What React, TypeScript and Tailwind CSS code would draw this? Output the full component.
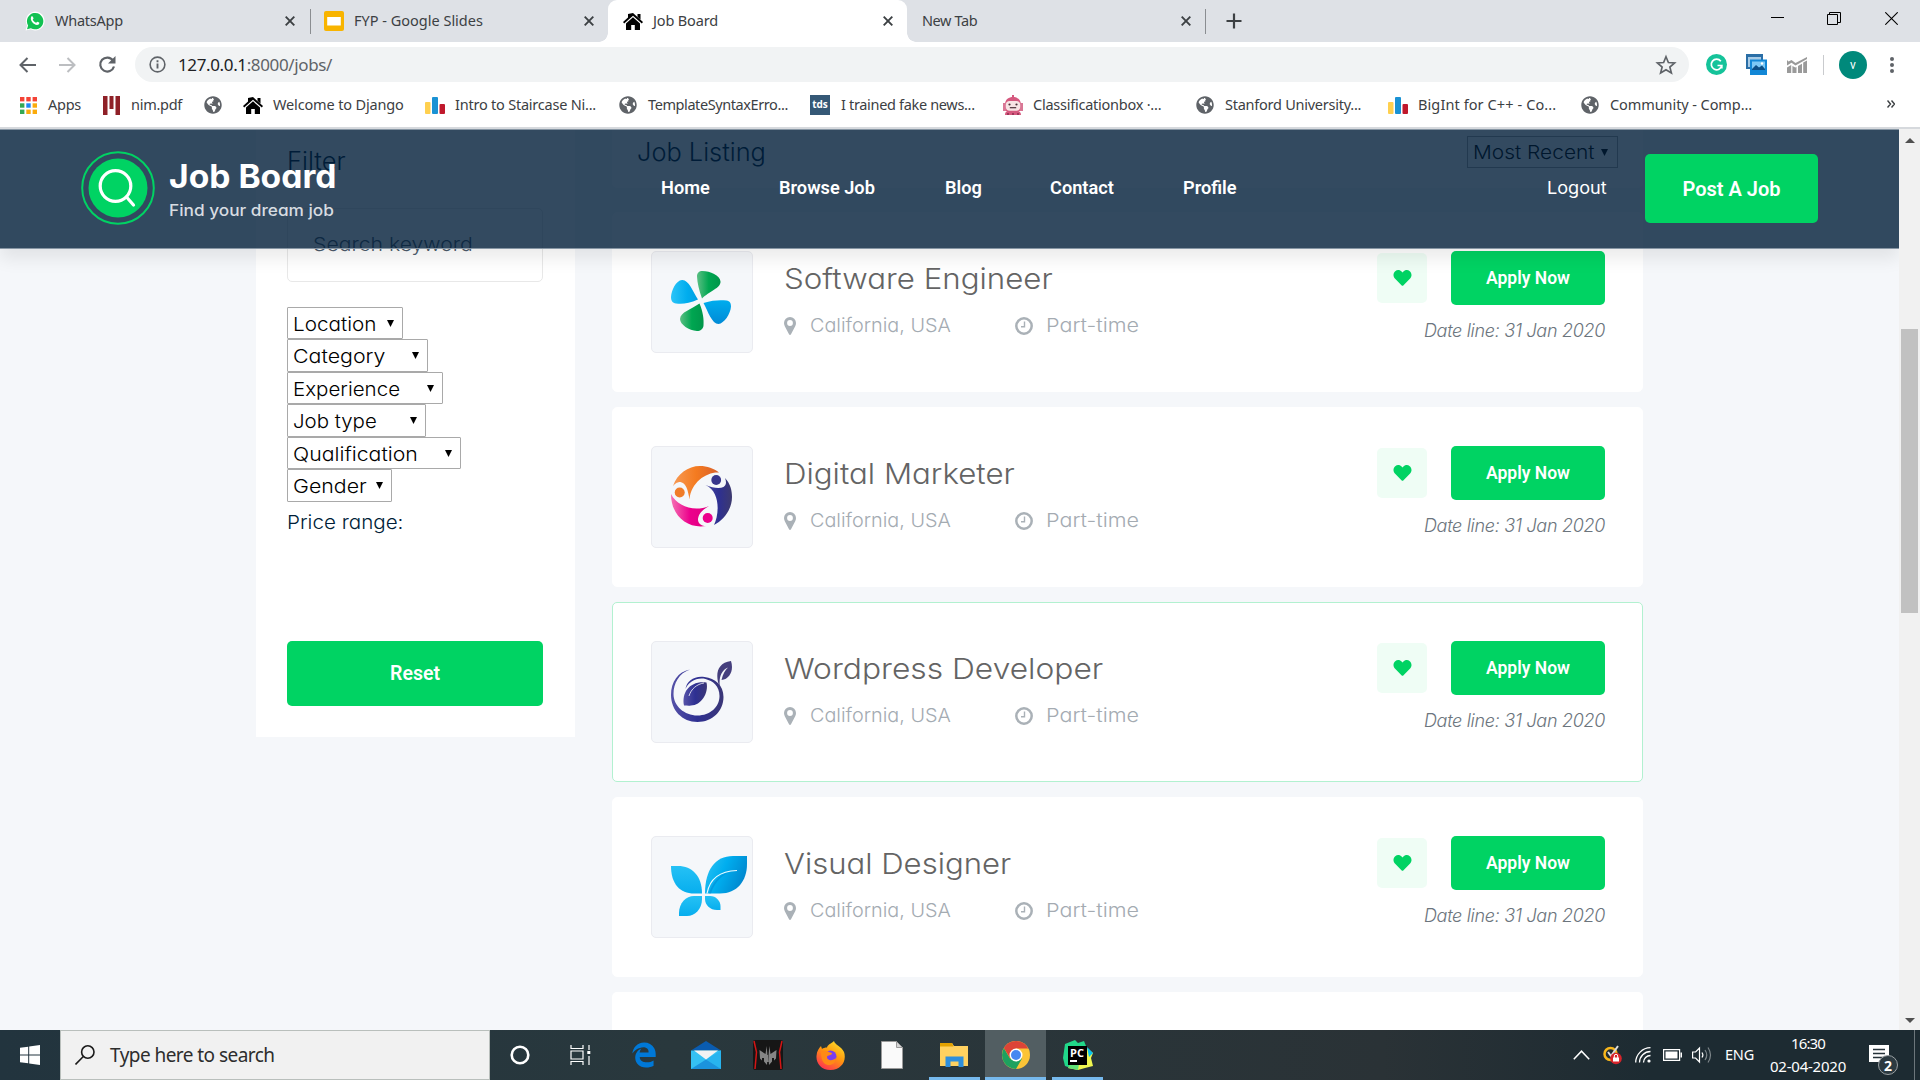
import React from "react";
import { FaEdgeLegacy, FaGlobeAmericas, FaHeart } from "react-icons/fa";

const UI = "font-['Noto_Sans',sans-serif] whitespace-nowrap";
const POP = "font-['Inter',sans-serif] [font-feature-settings:'cv11'] whitespace-nowrap";
const ROB = "font-['Roboto',sans-serif] whitespace-nowrap";

/* ---------- small icons ---------- */

const WhatsApp = () => (
  <svg viewBox="0 0 20 20" className="h-5 w-5" preserveAspectRatio="none">
    <path d="M.6 19.5 2 14.6A9.4 9.4 0 1 1 5.6 18.200Z" fill="#fff" />
    <path d="M2 18.200 3.100 14.400A8.200 8.200 0 1 1 5.900 17.200Z" fill="#12c152" />
    <path d="M6.300 5.600c.5-.6 1.300-.5 1.600.2l.6 1.400c.1.500-.8 1.200-.7 1.500.7 1.400 1.800 2.400 3.300 3 .400.100.900-1.200 1.400-1l1.600.8c.500.300.200 1.500-.5 2-3.200 2.100-9.600-3.700-7.300-7.900z" fill="#fff" />
  </svg>
);

const Slides = () => (
  <svg viewBox="0 0 20 20" className="h-5 w-5">
    <rect width="20" height="20" rx="2" fill="#f8b400" />
    <rect x="3.200" y="6" width="13.600" height="8.500" fill="#fff" />
  </svg>
);

const House = () => (
  <svg viewBox="0 0 20 17" className="h-[17px] w-5" preserveAspectRatio="none">
    <path d="M10 0 20 9l-1.200 1.500L10 2.800 1.200 10.500 0 9l5-4.500V1h0zM14.500 1h3v5.500l-3-2.700z" fill="#000" />
    <path d="M10 4.300 17 10.500V17h-5.200v-5H8.200v5H3v-6.500z" fill="#000" />
  </svg>
);

const TabClose = () => (
  <svg viewBox="0 0 10 10" className="h-[10px] w-[10px]">
    <path d="M.7.7l8.600 8.600M9.300.7.7 9.300" stroke="#3c4043" strokeWidth="1.900" />
  </svg>
);

const Globe = () => <FaGlobeAmericas className="h-[18px] w-[18px] text-[#5f6368]" />;

const Bars = () => (
  <svg viewBox="0 0 20 17" className="h-[17px] w-5">
    <rect x="0" y="5" width="5.500" height="12" rx="1" fill="#ffd04f" />
    <rect x="7" y="0" width="6" height="17" rx="1" fill="#1a92d4" />
    <rect x="14.500" y="7" width="5.500" height="10" rx="1" fill="#c0182c" />
  </svg>
);

const Apps = () => (
  <svg viewBox="0 0 17 17" className="h-[17px] w-[17px]">
    {["#f44336", "#f44336", "#f44336", "#34a853", "#1e88f5", "#fbab0c", "#34a853", "#fbab0c", "#fbab0c"].map((f, i) => (
      <rect key={i} x={(i % 3) * 6.3} y={Math.floor(i / 3) * 6.3} width="4.400" height="4.400" fill={f} />
    ))}
  </svg>
);

const Nim = () => (
  <svg viewBox="0 0 17 19" className="h-[19px] w-[17px]">
    <path d="M0 0h4.500v19H0zM6.500 0h4v13h-4zM12.500 0H17v19h-4.500z" fill="#8f2027" />
  </svg>
);

const Robot = () => (
  <svg viewBox="0 0 20 20" className="h-5 w-5">
    <path d="M9 0h2v3H9zM2 10C2 4 6 2 10 2s8 2 8 8v6H2zM2 20c0-4 3-5 8-5s8 1 8 5z" fill="#d5587e" />
    <path d="M0 8h3v8H0zM17 8h3v8h-3z" fill="#d97795" />
    <rect x="2.800" y="6" width="14.400" height="9.800" rx="4" fill="#f7e3e4" />
    <circle cx="6.500" cy="9.500" r="1.100" fill="#4a3038" />
    <circle cx="13.500" cy="9.500" r="1.100" fill="#4a3038" />
    <path d="M6.800 12.700h6.400" stroke="#4a3038" strokeWidth="1.200" />
    <path d="M4 19h2M9 19h2M14 19h2" stroke="#8c2c4e" strokeWidth="1.500" />
  </svg>
);

/* ---------- browser ---------- */

const Tab = ({ box, icon, label, track }: { box: string; icon?: React.ReactNode; label: string; track: string }) => (
  <div className={"flex h-[42px] items-center " + box}>
    {icon && <span className="mr-[10px] flex w-5 shrink-0 justify-center">{icon}</span>}
    <span className={`${UI} flex-1 pb-[2px] text-[14.5px] leading-5 text-[#3c4043] ${track}`}>{label}</span>
    <TabClose />
  </div>
);

const TabStrip = () => (
  <div className="flex h-[42px] bg-[#dee1e6]">
    <Tab box="w-[310px] pl-[25px] pr-[15px]" icon={<WhatsApp />} label="WhatsApp" track="tracking-[-0.24px]" />
    <span className="mt-[9px] h-[25px] w-px bg-[#8a8d91]" />
    <Tab box="w-[297px] pl-[13px] pr-[14px]" icon={<Slides />} label="FYP - Google Slides" track="" />
    <div className="relative w-[299px] rounded-t-[9px] bg-white">
      <span className="absolute bottom-0 -left-[9px] h-[9px] w-[9px] bg-[radial-gradient(circle_at_0_0,#dee1e6_8.500px,#fff_9px)]" />
      <span className="absolute -right-[9px] bottom-0 h-[9px] w-[9px] bg-[radial-gradient(circle_at_100%_0,#dee1e6_8.500px,#fff_9px)]" />
      <Tab box="pl-[15px] pr-[14px]" icon={<House />} label="Job Board" track="tracking-[-0.15px]" />
    </div>
    <Tab box="w-[298px] pl-[15px] pr-[14px]" label="New Tab" track="tracking-[-0.4px]" />
    <span className="mt-[9px] h-[25px] w-px bg-[#8a8d91]" />
    <svg viewBox="0 0 16 16" className="mt-[13px] ml-5 h-4 w-4">
      <path d="M8 .5v15M.5 8h15" stroke="#3c4043" strokeWidth="2.200" />
    </svg>
    <div className="ml-auto flex pt-3 pr-[22px]">
      <svg viewBox="0 0 13 13" className="mr-[43px] h-[13px] w-[13px]"><path d="M0 5.500h13" stroke="#000" /></svg>
      <svg viewBox="0 0 14 13" className="mr-11 h-[13px] w-[14px]">
        <path d="M.5 2.500h10v10H.5zM2.500 2.500v-2h11v10h-3" fill="none" stroke="#000" />
      </svg>
      <svg viewBox="0 0 13 13" className="h-[13px] w-[13px]"><path d="M.3.3l12.400 12.400M12.700.3.3 12.700" stroke="#000" strokeWidth="1.100" /></svg>
    </div>
  </div>
);

const Toolbar = () => (
  <div className="flex h-[45px] items-center pl-[19px]">
    <svg viewBox="0 0 17 16" className="h-4 w-[17px]" fill="none" stroke="#5f6368" strokeWidth="2"><path d="M17 8H2M8.500 1 1.500 8l7 7" /></svg>
    <svg viewBox="0 0 17 16" className="ml-[23px] h-4 w-[17px]" fill="none" stroke="#bcbec1" strokeWidth="2"><path d="M0 8h15M8.500 1l7 7-7 7" /></svg>
    <svg viewBox="0 0 18 18" className="ml-[22px] h-[18px] w-[18px]">
      <path d="M15 4.500A7 7 0 1 0 16 10.500" fill="none" stroke="#5f6368" strokeWidth="2.200" />
      <path d="M17.500 0v7.500H10z" fill="#5f6368" />
    </svg>
    <div className="ml-[19px] flex h-[35px] w-[1554px] items-center rounded-full bg-[#f1f3f4] pr-[12px] pl-[14px]">
      <svg viewBox="0 0 18 18" className="h-[17px] w-[17px]">
        <circle cx="9" cy="9" r="7.800" fill="none" stroke="#5f6368" strokeWidth="1.700" />
        <path d="M9 8v5.200M9 4.600v2" stroke="#5f6368" strokeWidth="2" />
      </svg>
      <span className={`${UI} ml-3 text-[17px] leading-6 tracking-[-0.37px] text-[#5f6368]`}>
        <span className="text-[#202124]">127.0.0.1</span>:8000/jobs/
      </span>
      <svg viewBox="0 0 24 24" className="ml-auto h-[22px] w-[22px]">
        <path d="m12 3 2.600 6.300 6.800.5-5.200 4.400 1.700 6.600-5.900-3.600-5.900 3.600 1.700-6.600-5.200-4.400 6.800-.5z" fill="none" stroke="#5f6368" strokeWidth="1.800" />
      </svg>
    </div>
    <svg viewBox="0 0 21 21" className="ml-[17px] h-[21px] w-[21px]">
      <circle cx="10.500" cy="10.500" r="10.500" fill="#15c39a" />
      <path d="M14.800 7.200A5.300 5.300 0 1 0 15.800 11.500H11.500M15.800 11.500v3" fill="none" stroke="#fff" strokeWidth="1.700" />
    </svg>
    <svg viewBox="0 0 21 21" className="ml-[19px] h-[21px] w-[21px]">
      <path d="M0 0h17v15H0z" fill="#2a6ea6" />
      <path d="M2 3h13v10H2z" fill="#a8cbe6" />
      <path d="M4 5.500h17V21H4z" fill="#1287d6" />
      <path d="M6 7.500h13v8H6z" fill="#7cc8f5" />
      <path d="M6 15l4-4 3 2.500 3-2 3 3.500v1H6z" fill="#0c4f86" />
      <circle cx="16" cy="9.500" r="1.200" fill="#fff" />
    </svg>
    <svg viewBox="0 0 20 16" className="ml-[20px] h-4 w-5">
      <path d="M0 10.500 4.200 8v8H0zM5.400 9l3 1.500L9.500 10v6H5.400zM11 9l4-2.300V16h-4zM16.200 5.500 20 3.500V16h-3.800zM0 3l1.500 1.500L4.500 3 8.500 6 20 0v2L8.500 8.500 4.500 5.800 0 8.500z" fill="#9a9a9a" />
    </svg>
    <span className="ml-[16px] h-5 w-px bg-[#c9cbce]" />
    <span className={`${ROB} ml-[15px] flex h-7 w-7 items-center justify-center rounded-full bg-[#00897b] text-[12px] text-white`}>v</span>
    <svg viewBox="0 0 4 16" className="ml-[23px] h-4 w-1" fill="#5f6368">
      <circle cx="2" cy="2" r="2" /><circle cx="2" cy="8" r="2" /><circle cx="2" cy="14" r="2" />
    </svg>
  </div>
);

const bookmarks: { slot: string; icon: React.ReactNode; gap: string; label?: string; track?: string }[] = [
  { slot: "w-[83px]", icon: <Apps />, gap: "gap-[11px]", label: "Apps", track: "tracking-[-0.25px]" },
  { slot: "w-[101px]", icon: <Nim />, gap: "gap-[11px]", label: "nim.pdf", track: "tracking-[-0.27px]" },
  { slot: "w-[39px]", icon: <Globe />, gap: "" },
  { slot: "w-[182px]", icon: <House />, gap: "gap-[10px]", label: "Welcome to Django", track: "tracking-[-0.15px]" },
  { slot: "w-[194px]", icon: <Bars />, gap: "gap-[10px]", label: "Intro to Staircase Ni...", track: "tracking-[-0.22px]" },
  { slot: "w-[191px]", icon: <Globe />, gap: "gap-[11px]", label: "TemplateSyntaxErro...", track: "tracking-[-0.41px]" },
  {
    slot: "w-[193px]",
    icon: <span className="flex h-5 w-5 items-center justify-center bg-[#355876] pb-px font-['Open_Sans'] text-[10px] font-bold text-white">tds</span>,
    gap: "gap-[11px]", label: "I trained fake news...", track: "tracking-[-0.33px]",
  },
  { slot: "w-[193px]", icon: <Robot />, gap: "gap-[10px]", label: "Classificationbox ·...", track: "tracking-[-0.24px]" },
  { slot: "w-[192px]", icon: <Globe />, gap: "gap-[11px]", label: "Stanford University...", track: "tracking-[-0.25px]" },
  { slot: "w-[193px]", icon: <Bars />, gap: "gap-[10px]", label: "BigInt for C++ - Co...", track: "tracking-[0.1px]" },
  { slot: "w-[200px]", icon: <Globe />, gap: "gap-[11px]", label: "Community - Comp...", track: "tracking-[-0.08px]" },
];

const Bookmarks = () => (
  <div className="flex h-[42px] items-center border-b-2 border-[#d6d9dd] bg-white pb-[4px] pl-5">
    {bookmarks.map((b, i) => (
      <div key={i} className={`flex shrink-0 items-center ${b.gap} ${b.slot}`}>
        <span className="shrink-0">{b.icon}</span>
        {b.label && <span className={`${UI} pb-[2px] text-[14.5px] leading-5 text-[#3c4043] ${b.track}`}>{b.label}</span>}
      </div>
    ))}
    <svg viewBox="0 0 8 8" className="mr-[25px] mb-[2px] ml-auto h-2 w-2" fill="none" stroke="#3c4043" strokeWidth="1.400"><path d="M.5.5 3.500 4l-3 3.500M4.500.5l3 3.500-3 3.500" /></svg>
  </div>
);

/* ---------- page ---------- */

const Caret = () => (
  <svg viewBox="0 0 7 7" className="h-[7px] w-[7px]"><path d="M0 0h7L3.500 7z" fill="#000" /></svg>
);

/* Text set wider than the font's natural advance; each scale suits one label. */
const Wide = ({ s, className = "", children }: { s: string; className?: string; children: React.ReactNode }) => (
  <span className={`inline-block origin-left ${s} ${className}`}>{children}</span>
);

const filters = [
  { label: "Location", box: "w-[116px] h-8", s: "scale-x-[1.09]" },
  { label: "Category", box: "w-[141px] h-[33px]", s: "scale-x-[1.125]" },
  { label: "Experience", box: "w-[156px] h-8", s: "scale-x-[1.08]" },
  { label: "Job type", box: "w-[139px] h-[33px]", s: "scale-x-[1.075]" },
  { label: "Qualification", box: "w-[174px] h-8", s: "scale-x-[1.12]" },
  { label: "Gender", box: "w-[105px] h-[33px]", s: "scale-x-[1.125]" },
];

const FilterPanel = () => (
  <aside className="flex h-[608px] w-[319px] shrink-0 flex-col items-start bg-white px-[31px]">
    <h3 className={`${POP} mt-[13px] text-[25px] leading-[38px] font-light text-[#001d38]`}><Wide s="scale-x-[1.02]">Filter</Wide></h3>
    <div className="mt-[28px] flex h-[74px] w-[256px] items-center rounded-[5px] border border-[#e8e8e8] pl-[25px]">
      <span className={`${POP} text-[19px] font-light text-[#4d5c6c]`}><Wide s="scale-x-[1.115]">Search keyword</Wide></span>
    </div>
    <div className="mt-[25px] flex flex-col items-start">
      {filters.map((f) => (
        <div key={f.label} className={`flex items-center justify-between rounded-[1px] border border-[#a9a9a9] bg-white pr-[8px] pl-[5px] ${f.box}`}>
          <span className={`${POP} pt-[3px] text-[19px] leading-6 font-[350] text-black`}><Wide s={f.s}>{f.label}</Wide></span>
          <Caret />
        </div>
      ))}
    </div>
    <p className={`${POP} mt-[6px] text-[19px] leading-[30px] font-[350] text-[#001d38]`}><Wide s="scale-x-[1.085]">Price range:</Wide></p>
    <button className={`${ROB} mt-[103px] h-[65px] w-[256px] rounded-[5px] bg-[#00d363] pt-px text-[19.5px] font-semibold text-white`}>Reset</button>
  </aside>
);

const Clover = () => (
  <svg viewBox="0 0 60 60" className="h-[60px] w-[60px]">
    <defs>
      <linearGradient id="g1"><stop offset="0" stopColor="#5cbf84" /><stop offset=".5" stopColor="#00a651" /><stop offset="1" stopColor="#00964a" /></linearGradient>
      <linearGradient id="b1"><stop offset="0" stopColor="#2bc4f8" /><stop offset=".6" stopColor="#00adee" /><stop offset="1" stopColor="#009fe3" /></linearGradient>
      <linearGradient id="b2" x2="0" y2="1"><stop offset="0" stopColor="#00adee" /><stop offset="1" stopColor="#008ad6" /></linearGradient>
    </defs>
    <path d="M31 27.500C28 19 26.300 12 26 5.500 25.900 2 28 0 31.500 0 39 0 49 4.500 49.500 10.500 50 17 38 20.500 31 27.500Z" fill="url(#g1)" />
    <path d="M28.500 32.500C32 41 33 48 32.500 54.500 32.300 58 29.500 60 26 60 18 59.500 9 53.500 9 48 9.500 41 20 38.500 28.500 32.500Z" fill="url(#g1)" />
    <path d="M27 28.500C18 32.500 11 33.500 5 32.500 1.500 32 0 29.500 0 26 .5 19 5 9.500 11 9 17.500 8.500 22 20.500 27 28.500Z" fill="url(#b1)" />
    <path d="M32.500 32C42 29 49 29 55.500 29.500 59 30 60 32 60 35.500 59.500 43 53 52.500 47.500 53 41 53 37 40.500 32.500 32Z" fill="url(#b2)" />
  </svg>
);

const People = () => (
  <svg viewBox="0 0 61 61" className="h-[61px] w-[61px]">
    <defs>
      <linearGradient id="o1"><stop offset="0" stopColor="#f79a55" /><stop offset=".5" stopColor="#f47b20" /><stop offset="1" stopColor="#d9602a" /></linearGradient>
      <linearGradient id="n1"><stop offset="0" stopColor="#4645a0" /><stop offset=".5" stopColor="#2e3092" /><stop offset="1" stopColor="#3d3a6e" /></linearGradient>
      <linearGradient id="p1"><stop offset="0" stopColor="#f571b3" /><stop offset=".5" stopColor="#ec008c" /><stop offset="1" stopColor="#e0007f" /></linearGradient>
    </defs>
    <path d="M2 20C6 8 17 0 29 0c7 0 14 2.500 19 6.500C36 5.500 20 16 18.500 33.500 17 24 15 17 9.500 16 5.500 16 3.500 18.500 2 20Z" fill="url(#o1)" />
    <path d="M54 12c5.500 6 7 12.500 7 19 0 12-8 23-18 28 5-10 7-33-8.500-40 7 3 14 4 18 2 3-2 3-5 1.500-9Z" fill="url(#n1)" />
    <path d="M0 28C6 40 23 46.500 38 40c-7 4-11 8.500-11 14 .5 4 4 6 8 6C16 63 0 49.500 0 28Z" fill="url(#p1)" />
    <circle cx="8.700" cy="26.500" r="5" fill="#f07c28" />
    <circle cx="45.200" cy="14" r="4.900" fill="#37358c" />
    <circle cx="36.700" cy="52" r="5" fill="#ec008c" />
  </svg>
);

const Leaf = () => (
  <svg viewBox="0 0 61 61" className="h-[61px] w-[61px]">
    <defs><linearGradient id="l1"><stop offset="0" stopColor="#5652a8" /><stop offset=".5" stopColor="#2e3092" /><stop offset="1" stopColor="#3b3777" /></linearGradient></defs>
    <path d="M19 8.500C8 12 2.500 22.500 2.500 33c0 12 11 21.500 24 21.500C39 54.500 48.500 46 48.500 35c0-10-6.500-15-14-17-9-2-17 3-20 10 1-8 9-13.500 19-12 10.500 1.500 19 8 19 20C52.500 50 41.500 61 26.500 61 11 61 0 49 0 34 0 21 7 10.500 19 8.500Z" fill="url(#l1)" />
    <path d="M13 44.500C10.500 31 19 19.500 35.500 21.500 38 32 30 44.500 20 44.500c-3 .5-5-.2-7 0Z" fill="url(#l1)" />
    <path d="M18 35C20 28 26 23 33 22" fill="none" stroke="#f5f6fb" strokeWidth=".8" />
    <path d="M49 27C44 15 45 2 60 0 63 9 59 18 50.500 19 52 13 54 9 57 6.500 50 9.500 47.500 17 49 27Z" fill="#453f7d" />
  </svg>
);

const Butterfly = () => (
  <svg viewBox="0 0 76 60" className="h-[60px] w-[76px]">
    <defs>
      <linearGradient id="c1" x2="1" y2=".4"><stop offset="0" stopColor="#32c5f4" /><stop offset=".5" stopColor="#00aeef" /><stop offset="1" stopColor="#0089d0" /></linearGradient>
      <linearGradient id="c2" x2="0" y2="1"><stop offset="0" stopColor="#25c1f5" /><stop offset="1" stopColor="#07aeee" /></linearGradient>
    </defs>
    <path d="M0 10h7C21 10 31 20 31 37.500H23C9 37.500 0 28 0 10Z" fill="url(#c2)" />
    <path d="M34 37.500C34 14 44 0 62 0H76V8C76 25 66 37.500 49 37.500Z" fill="url(#c1)" />
    <path d="M36 37.500C38.500 24 48 15 66 14.500" fill="none" stroke="#eefaff" strokeWidth="1.200" />
    <path d="M38 37.500C41 27 48 19 57 16.500 48 22 43 28 40 37.500Z" fill="#0085cf" opacity=".5" />
    <path d="M8 60V57C8 47 15 40 23 40h8v3c0 10-7 17-15 17Z" fill="url(#c2)" />
    <path d="M34 40h5c6 0 10.500 5 10.500 10v4H46c-7 0-12-5-12-11Z" fill="url(#c2)" />
  </svg>
);

const PinIcon = () => (
  <svg viewBox="0 0 12 18" className="h-[18px] w-3">
    <path fillRule="evenodd" d="M6 0a6 6 0 0 1 6 6c0 1.200-.3 2.200-.8 3.200L7 17.300c-.4.900-1.600.9-2 0L.8 9.200A6.600 6.600 0 0 1 0 6a6 6 0 0 1 6-6zm0 3.100a2.900 2.900 0 1 0 0 5.800 2.900 2.900 0 0 0 0-5.800z" fill="#aab1b7" />
  </svg>
);

const ClockIcon = () => (
  <svg viewBox="0 0 18 18" className="h-[18px] w-[18px]" fill="none" stroke="#aab1b7">
    <circle cx="9" cy="9" r="7.700" strokeWidth="2.500" />
    <path d="M9.500 4.500v5.200H6" strokeWidth="1.400" />
  </svg>
);

const jobs = [
  { title: "Software Engineer", s: "scale-x-[1.078]", logo: <Clover />, edge: "border-white" },
  { title: "Digital Marketer", s: "scale-x-[1.078]", logo: <People />, edge: "border-white" },
  { title: "Wordpress Developer", s: "scale-x-[1.095]", logo: <Leaf />, edge: "border-[#b2f1d0]" },
  { title: "Visual Designer", s: "scale-x-[1.072]", logo: <Butterfly />, edge: "border-white" },
];

const JobCard = ({ title, s, logo, edge }: (typeof jobs)[number]) => (
  <article className={`flex h-[180px] w-[1031px] shrink-0 rounded-[5px] border bg-white pt-[38px] pr-[37px] pl-[38px] ${edge}`}>
    <div className="h-[102px] w-[102px] rounded-[5px] border border-[#eaebf0] bg-[#f5f7fa] pt-[19px] pl-[19px]">{logo}</div>
    <div className="ml-[31px] pt-[7px]">
      <h4 className={`${POP} text-[29px] leading-[42px] font-[350] text-[#646464]`}><Wide s={s}>{title}</Wide></h4>
      <div className={`${POP} flex items-center pt-[12px] text-[19px] leading-[28px] font-[350] text-[#a4abb2]`}>
        <PinIcon />
        <span className="ml-[14px] w-[205px]"><Wide s="scale-x-[1.043]">California, USA</Wide></span>
        <ClockIcon />
        <span className="ml-[13px]"><Wide s="scale-x-[1.135]">Part-time</Wide></span>
      </div>
    </div>
    <div className="ml-auto flex flex-col items-end">
      <div className="flex items-center gap-6">
        <span className="flex h-[50px] w-[50px] items-center justify-center rounded-[5px] bg-[#effdf5] pb-px">
          <FaHeart className="h-[18px] w-[19px] text-[#00d363]" />
        </span>
        <button className={`${ROB} h-[54px] w-[154px] rounded-[5px] bg-[#00d363] pt-px text-[17.5px] font-semibold text-white`}>Apply Now</button>
      </div>
      <span className={`${POP} mt-[12px] text-[18px] leading-[28px] font-light tracking-[-0.31px] text-[#6c757d] italic`}>Date line: 31 Jan 2020</span>
    </div>
  </article>
);

const Listing = () => (
  <main className="flex w-[1031px] flex-col">
    <div className="-mt-5 flex h-[79px] shrink-0 justify-between rounded-b-[5px] bg-white px-[25px] pt-[20px]">
      <h4 className={`${POP} pt-[4px] text-[25px] leading-[38px] font-light text-[#001d38]`}><Wide s="scale-x-[1.015]">Job Listing</Wide></h4>
      <div className="mt-[7px] flex h-8 w-[151px] items-center justify-between border border-[#a9a9a9] pr-[9px] pl-[5px]">
        <span className={`${POP} pt-[2px] text-[19px] leading-6 font-light`}><Wide s="scale-x-[1.1]">Most Recent</Wide></span>
        <Caret />
      </div>
    </div>
    <div className="mt-6 flex flex-col gap-[15px]">
      {jobs.map((j) => <JobCard key={j.title} {...j} />)}
      <div className="h-[180px] shrink-0 rounded-[5px] bg-white" />
    </div>
  </main>
);

const Nav = () => (
  <header className="absolute inset-x-0 top-0 z-10 flex h-[120px] items-center border-y border-[#8796a4] bg-[rgba(0,29,56,0.8)] pb-[2px] pl-[81px] shadow-[0_10px_16px_rgba(0,0,0,0.08)]">
    <svg viewBox="0 0 74 74" className="h-[74px] w-[74px]">
      <circle cx="37" cy="37" r="35.800" fill="none" stroke="#00d363" strokeWidth="2" />
      <circle cx="37" cy="37" r="29.500" fill="#00d363" />
      <circle cx="34.500" cy="35" r="15.300" fill="none" stroke="#fff" strokeWidth="3.200" />
      <path d="M45.500 46 52.500 54" stroke="#fff" strokeWidth="3.200" strokeLinecap="round" />
    </svg>
    <div className={`${POP} ml-[14px] w-[492px] pt-[5px]`}>
      <div className="text-[32px] leading-[38px] font-bold text-white"><Wide s="scale-x-[1.05]">Job Board</Wide></div>
      <div className="pt-px text-[16px] leading-[26px] font-medium text-[#d7dce1]"><Wide s="scale-x-[1.078]">Find your dream job</Wide></div>
    </div>
    <nav className={`${ROB} flex text-[18.2px] font-semibold text-white`}>
      <a className="w-[118px]">Home</a>
      <a className="w-[166px]">Browse Job</a>
      <a className="w-[105px]">Blog</a>
      <a className="w-[133px]">Contact</a>
      <a className="w-[364px]">Profile</a>
    </nav>
    <a className={`${POP} w-[98px] pt-[2px] text-[17px] text-white`}><Wide s="scale-x-[1.065]">Logout</Wide></a>
    <button className={`${ROB} h-[69px] w-[173px] rounded-[5px] bg-[#00d363] pt-[2px] text-[20px] font-semibold text-white`}>Post A Job</button>
  </header>
);

const Page = () => (
  <div className="flex h-[901px]">
    <div className="relative flex h-[901px] w-[1899px] overflow-hidden bg-[#f5f7fa] pl-[256px]">
      <Nav />
      <FilterPanel />
      <div className="w-[37px] shrink-0" />
      <Listing />
    </div>
    <div className="flex w-[21px] flex-col items-center bg-[#f1f1f1] pt-[9px] pb-[7px]">
      <svg viewBox="0 0 10 5" className="h-[5px] w-[10px]"><path d="M0 5h10L5 0z" fill="#505050" /></svg>
      <div className="mt-[186px] h-[284px] w-[17px] bg-[#c1c1c1]" />
      <svg viewBox="0 0 10 5" className="mt-auto h-[5px] w-[10px]"><path d="M0 0h10L5 5z" fill="#505050" /></svg>
    </div>
  </div>
);

/* ---------- taskbar ---------- */

const Slot = ({ w, line, active, children }: { w: string; line?: string; active?: boolean; children: React.ReactNode }) => (
  <div className={`flex h-[50px] flex-col items-center ${w} ${active ? "bg-[#525e62]" : ""}`}>
    <div className="flex h-[47px] items-center pt-[3px]">{children}</div>
    {line && <div className={`h-[3px] bg-[#76b9ed] ${line}`} />}
  </div>
);

const Taskbar = () => (
  <footer className="flex h-[50px] bg-[linear-gradient(90deg,#22343e,#29383d_35%,#2a3236_72%,#1d2b32_86%,#1d2b32)]">
    <div className="flex w-[60px] items-center justify-center">
      <svg viewBox="0 0 20 20" className="h-5 w-5" fill="#fff"><path d="M0 2.800 8.200 1.700v7.800H0zM9.200 1.500 20 0v9.500H9.200zM0 10.500h8.200v7.800L0 17.200zM9.200 10.500H20V20L9.200 18.500z" /></svg>
    </div>
    <div className="flex w-[430px] items-center border border-[#b9bfbc] bg-[#f1f1f1] pl-[14px]">
      <svg viewBox="0 0 20 20" className="h-5 w-5" fill="none" stroke="#1a1a1a" strokeWidth="1.600"><circle cx="12.800" cy="7" r="6.200" /><path d="M8.300 11.500.5 19.500" /></svg>
      <span className={`${UI} ml-[15px] text-[19px] tracking-[-0.55px] text-[#2d2d2d]`}>Type here to search</span>
    </div>
    <Slot w="w-[60px]">
      <svg viewBox="0 0 20 20" className="h-5 w-5"><circle cx="10" cy="10" r="8.300" fill="none" stroke="#fff" strokeWidth="2.600" /></svg>
    </Slot>
    <Slot w="ml-px w-[58px]">
      <svg viewBox="0 0 21 20" className="h-5 w-[21px]" fill="none" stroke="#fff" strokeWidth="1.200"><path d="M1 0v3.500h12V0M1 20v-3.500h12V20M1 6h12v8H1zM19 0v5M19 11v9" /><path d="M17.300 6h3v3h-3z" fill="#fff" stroke="none" /></svg>
    </Slot>
    <Slot w="w-[70px]"><FaEdgeLegacy className="h-[28px] w-[26px] text-[#0078d7]" /></Slot>
    <Slot w="w-[54px]">
      <svg viewBox="0 0 30 28" className="h-7 w-[30px]">
        <path d="M0 9.500 15 0l15 9.500H0z" fill="#0a5cb0" />
        <path d="M0 9.500h30V28H0z" fill="#35c1f3" />
        <path d="M30 9.500V28L15 18.500z" fill="#28b4ef" />
        <path d="M0 28 15 18.500 30 28z" fill="#1b93dd" />
        <path d="M3 9.500h24L15 18.500z" fill="#f3f3f3" />
      </svg>
    </Slot>
    <Slot w="w-[70px]">
      <svg viewBox="0 0 30 30" className="h-[30px] w-[30px]">
        <rect width="30" height="30" rx="2" fill="#161616" />
        <path d="M1 1 3.500 12 2 29M29 1 26.500 12l1.500 17" fill="none" stroke="#d31515" strokeWidth="1.500" />
        <path d="M6.500 10 12.500 14l1.200-8 .8 10-.5 9-3-3.500V18H9v2.500l-2-2zM23.500 10 17.500 14l-1.200-8-.8 10 .5 9 3-3.500V18h2v2.500l2-2zM14 15h2v7h-2z" fill="#858585" />
      </svg>
    </Slot>
    <Slot w="w-[54px]">
      <svg viewBox="0 0 29 29" className="h-[29px] w-[29px]">
        <defs>
          <linearGradient id="ff" x1=".8" x2=".2" y2="1"><stop offset="0" stopColor="#ffe02b" /><stop offset=".45" stopColor="#ff980e" /><stop offset="1" stopColor="#ff2c55" /></linearGradient>
        </defs>
        <path d="M18 0c1 4 7 5 10 11 3 9-3 18-13.500 18C5 29 0 22 .5 15 .8 10 3 7 5 5l1 3c1-1 3-1.500 5-1.500C12 3 15 3 18 0Z" fill="url(#ff)" />
        <circle cx="14.500" cy="15.500" r="6" fill="#7a3df0" />
        <path d="M5 11c3-2 6-1 8 0 2 .5 3 1 3 2-2 2-5 1-5 3 0 4 6 4 9 1 0 7-8 9-12 5-2-2-3-6-3-11Z" fill="#ff8a16" />
      </svg>
    </Slot>
    <Slot w="w-[70px]">
      <svg viewBox="0 0 22 28" className="h-7 w-[22px]"><path d="M.5.500h15l6 6v21H.5z" fill="#fafafa" stroke="#9a9a9a" /><path d="M15.500.5v6h6z" fill="#d5d5d5" stroke="#9a9a9a" /></svg>
    </Slot>
    <Slot w="w-[54px]" line="w-[51px]">
      <svg viewBox="0 0 28 24" className="h-6 w-7">
        <path d="M0 0h12l2 3H28v20H0z" fill="#ffd160" /><path d="M0 0h12l1.500 3.500H0z" fill="#e2a100" />
        <path d="M5.500 13.500h18V24h-5v-5.500h-8V24h-5z" fill="#2f8fdc" />
      </svg>
    </Slot>
    <Slot w="ml-[4px] w-[61px]" line="w-[61px]" active>
      <svg viewBox="0 0 28 28" className="h-7 w-7">
        <circle cx="14" cy="14" r="14" fill="#fbc437" />
        <path d="M1.900 7A14 14 0 0 0 14 28l6-10.500L8 17.500z" fill="#1ea15f" />
        <path d="M14 7.500h12.300A14 14 0 0 0 1.900 7L8.300 17.500z" fill="#dc4437" />
        <circle cx="14" cy="14" r="6.500" fill="#fff" /><circle cx="14" cy="14" r="5" fill="#4688f1" />
      </svg>
    </Slot>
    <Slot w="ml-[5px] w-[53px]" line="w-[51px]">
      <span className="relative flex h-[30px] w-[30px] items-center justify-center">
        <svg viewBox="0 0 30 30" className="absolute inset-0 h-[30px] w-[30px]">
          <path d="M2 4 12 0l3 3 6-2 2 5H8v22L2 26 0 18z" fill="#21d789" /><path d="M24 8l6 5-2 5 2 8-8 2-7 2-10-2 3-4h15z" fill="#f0f650" /><path d="M24 7l6 6-4 4z" fill="#07c3f2" /><path d="M5 28l3-4h8l-1 6z" fill="#60e377" />
        </svg>
        <span className="relative flex h-[19px] w-[19px] flex-col bg-black pl-[2px] font-['Open_Sans'] text-[11px] leading-[13px] font-bold text-white">
          PC<span className="mt-[1px] h-[2px] w-[7px] bg-white" />
        </span>
      </span>
    </Slot>
    <div className={`${UI} ml-auto flex items-center text-[14.5px] text-white`}>
      <svg viewBox="0 0 17 10" className="h-[10px] w-[17px]" fill="none" stroke="#fff" strokeWidth="1.500"><path d="M.8 9.200 8.500 1.200l7.700 8" /></svg>
      <svg viewBox="0 0 19 20" className="ml-[13px] h-5 w-[19px]">
        <circle cx="7.500" cy="9" r="6" fill="none" stroke="#f7b61c" strokeWidth="2.500" /><path d="M5 7l3 4 7-10" fill="none" stroke="#ddd" strokeWidth="2" />
        <circle cx="13" cy="13.500" r="5.800" fill="#d7242b" /><path d="M10 12.500h6v4h-6z" fill="#fff" /><path d="M11.300 13v-2a1.700 1.700 0 0 1 3.400 0v2" fill="none" stroke="#fff" />
      </svg>
      <svg viewBox="0 0 16 16" className="ml-[13px] h-4 w-4" fill="none" stroke="#fff" strokeWidth="1.300"><path d="M.7 15.500A15 15 0 0 1 15.500.7M4.500 15.500A11 11 0 0 1 15.500 4.500M8.500 15.500a7 7 0 0 1 7-7" /><circle cx="14" cy="14" r="1.600" fill="#fff" stroke="none" /></svg>
      <svg viewBox="0 0 19 12" className="ml-[12px] h-3 w-[19px]"><path d="M.6.6h16v10.800H.6z" fill="none" stroke="#fff" strokeWidth="1.200" /><path d="M2.500 2.500h12v7h-12zM17.500 3.500H19v5h-1.500z" fill="#fff" /></svg>
      <svg viewBox="0 0 20 18" className="ml-[10px] h-[18px] w-5" fill="none" stroke="#fff" strokeWidth="1.200"><path d="M.6 6h3L7.500 2v14L3.600 12h-3z" /><path d="M10 6.500q1.800 2.500 0 5" /><path d="M13 4q3.500 5 0 10M16 1.500q5 7.500 0 15" stroke="#7d868a" /></svg>
      <span className="ml-[13px] w-[45px] tracking-[-0.2px]">ENG</span>
      <span className="flex w-[76px] flex-col items-center text-[15px] leading-[23px]">
        <span className="tracking-[-0.87px]">16:30</span><span className="tracking-[-0.23px]">02-04-2020</span>
      </span>
      <span className="relative ml-[23px] h-[34px] w-[30px]">
        <svg viewBox="0 0 20 22" className="absolute top-[7px] left-0 h-[22px] w-5"><path d="M0 0h20v17h-6v4.500L9.500 17H0z" fill="#fff" /><path d="M4 4.500h12M4 8.500h12M4 12.500h12" stroke="#27333a" strokeWidth="1.300" /></svg>
        <span className="absolute top-[17px] left-[9px] flex h-5 w-5 items-center justify-center rounded-full border border-[#9aa0a3] bg-[#2c3a41] text-[14px] font-bold text-white">2</span>
      </span>
      <span className="ml-[15px] h-[50px] w-px bg-[#6c767b]" />
      <span className="w-[5px]" />
    </div>
  </footer>
);

export default function App() {
  return (
    <div className="h-[1080px] w-[1920px] overflow-hidden bg-white">
      <TabStrip />
      <Toolbar />
      <Bookmarks />
      <Page />
      <Taskbar />
    </div>
  );
}
